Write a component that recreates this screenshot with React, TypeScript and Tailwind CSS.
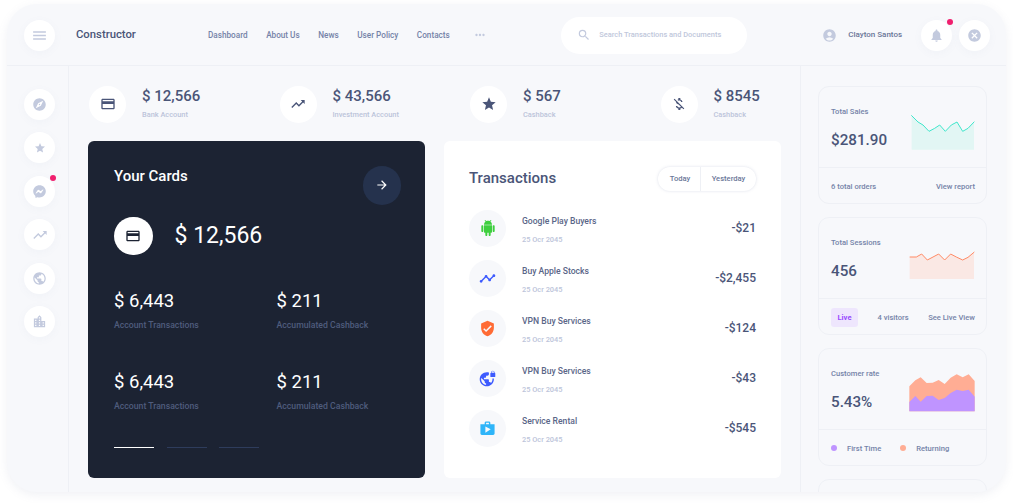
import React from "react";
import { FaFacebookMessenger } from "react-icons/fa";
import {
  MdAccountCircle, MdArrowForward, MdCancel, MdCreditCard, MdExplore, MdLocationCity, MdMenu,
  MdMoneyOff, MdMoreHoriz, MdNotifications, MdPublic, MdSearch, MdShop, MdStar, MdTimeline, MdTrendingUp,
  MdVerifiedUser, MdVpnLock,
} from "react-icons/md";

const stats = [
  { icon: <MdCreditCard size={16} />, value: "$ 12,566", label: "Bank Account" },
  { icon: <MdTrendingUp size={16} />, value: "$ 43,566", label: "Investment Account" },
  { icon: <MdStar size={16} />, value: "$ 567", label: "Cashback" },
  { icon: <MdMoneyOff size={16} />, value: "$ 8545", label: "Cashback" },
];

function Android() {
  return (
    <svg width="16" height="16" viewBox="0 0 24 24" fill="#3ecf3e">
      <path d="M6 18c0 .55.45 1 1 1h1v3.5c0 .83.67 1.5 1.5 1.5s1.5-.67 1.5-1.5V19h2v3.5c0 .83.67 1.5 1.5 1.5s1.5-.67 1.5-1.5V19h1c.55 0 1-.45 1-1V8H6v10zM3.5 8C2.67 8 2 8.67 2 9.5v7c0 .83.67 1.5 1.5 1.5S5 17.33 5 16.5v-7C5 8.67 4.33 8 3.5 8zm17 0c-.83 0-1.5.67-1.5 1.5v7c0 .83.67 1.5 1.5 1.5s1.5-.67 1.5-1.5v-7c0-.83-.67-1.5-1.5-1.5zm-4.97-5.84l1.3-1.3c.2-.2.2-.51 0-.71-.2-.2-.51-.2-.71 0l-1.48 1.48C13.85 1.23 12.95 1 12 1c-.96 0-1.86.23-2.66.63L7.85.15c-.2-.2-.51-.2-.71 0-.2.2-.2.51 0 .71l1.31 1.31C6.97 3.26 6 5.01 6 7h12c0-1.99-.97-3.75-2.47-4.84z" />
    </svg>
  );
}

const tx = [
  { icon: <Android />, name: "Google Play Buyers", amount: "-$21" },
  { icon: <MdTimeline size={17} className="text-[#3d5afe]" />, name: "Buy Apple Stocks", amount: "-$2,455" },
  { icon: <MdVerifiedUser size={17} className="text-[#ff6b35]" />, name: "VPN Buy Services", amount: "-$124" },
  { icon: <MdVpnLock size={17} className="text-[#3d5afe]" />, name: "VPN Buy Services", amount: "-$43" },
  { icon: <MdShop size={17} className="text-[#2fb5f9]" />, name: "Service Rental", amount: "-$545" },
];

function Circle({ children }: { children: React.ReactNode }) {
  return (
    <div className="relative flex h-[31px] w-[31px] shrink-0 items-center justify-center rounded-full bg-white text-[#c3cade] shadow-[0_2px_8px_rgba(120,130,170,0.05)]">
      {children}
    </div>
  );
}

function Dot() {
  return <span className="absolute right-[-1px] top-[-1px] h-[6px] w-[6px] rounded-full bg-[#f01f6e]" />;
}

function CardStat({ value, label }: { value: string; label: string }) {
  return (
    <div>
      <div className="text-[18.5px] leading-[24px] text-white">{value}</div>
      <div className="mt-[6px] text-[8.7px] font-medium leading-[12px] text-[#4f5c7d]">{label}</div>
    </div>
  );
}

function Panel({ title, value, chart, footer }: { title: string; value: string; chart: React.ReactNode; footer: React.ReactNode }) {
  return (
    <div className="h-[118px] w-[169px] shrink-0 rounded-[11px] border border-[#eef0f5] bg-[#f7f8fb]">
      <div className="flex h-[81px] justify-between border-b border-[#eef0f5] px-[12px] pr-[11px]">
        <div className="pt-[19px]">
          <div className="text-[7.6px] font-medium leading-[12px] text-[#7583a8]">{title}</div>
          <div className="mt-[12px] text-[15.2px] font-medium leading-[20px] text-[#4a5578]">{value}</div>
        </div>
        <div className="pt-[27px]">{chart}</div>
      </div>
      <div className="flex h-[35px] items-center justify-between pl-[12px] pr-[11px] pt-[2px] text-[7.6px] font-medium text-[#7583a8]">{footer}</div>
    </div>
  );
}

export default function App() {
  return (
    <div className="h-[504px] w-[1013px] overflow-hidden bg-white pl-[7px] pr-[7px] pt-[4px] font-['Roboto',sans-serif]">
      <div className="flex h-[488px] w-[999px] flex-col overflow-hidden rounded-[30px] bg-[#f7f8fb] shadow-[0_3px_10px_rgba(130,140,170,0.12)]">
        <header className="flex h-[62px] shrink-0 items-center border-b border-[#eef0f5] pl-[17px] pt-[1px]">
          <Circle><MdMenu size={17} /></Circle>
          <div className="ml-[21px] w-[132px] text-[11.3px] font-medium text-[#4a5578]">Constructor</div>
          <nav className="flex items-center gap-[18.5px] text-[8.2px] font-medium text-[#7583a8]">
            <span>Dashboard</span>
            <span>About Us</span>
            <span>News</span>
            <span>User Policy</span>
            <span>Contacts</span>
            <MdMoreHoriz size={14} className="ml-[5px] text-[#c3cade]" />
          </nav>
          <div className="ml-[74px] flex h-[37px] w-[186px] items-center rounded-full bg-white pl-[16px]">
            <MdSearch size={14} className="text-[#c3cade]" />
            <span className="ml-[8px] text-[7.45px] font-medium text-[#c0c7db]">Search Transactions and Documents</span>
          </div>
          <MdAccountCircle size={15} className="ml-[74.5px] text-[#c3cade]" />
          <span className="ml-[11.5px] w-[73px] text-[8px] font-medium text-[#6a7698]">Clayton Santos</span>
          <Circle><MdNotifications size={15} /><Dot /></Circle>
          <div className="ml-[7px]"><Circle><MdCancel size={15} /></Circle></div>
        </header>

        <div className="flex min-h-0 flex-1">
          <aside className="flex w-[62px] shrink-0 flex-col gap-[12.6px] border-r border-[#eef0f5] pl-[17px] pt-[22.5px]">
            <Circle><MdExplore size={15} /></Circle>
            <Circle><MdStar size={12} /></Circle>
            <Circle><FaFacebookMessenger size={13} /><Dot /></Circle>
            <Circle><MdTrendingUp size={16} /></Circle>
            <Circle><MdPublic size={15} /></Circle>
            <Circle><MdLocationCity size={15} /></Circle>
          </aside>

          <main className="w-[731px] shrink-0 pl-[19px] pt-[19.5px]">
            <div className="flex pl-[1px]">
              {stats.map((s) => (
                <div key={s.value} className="flex w-[190.5px] shrink-0">
                  <div className="flex h-[37px] w-[37px] items-center justify-center rounded-full bg-white text-[#4a5578]">{s.icon}</div>
                  <div className="ml-[16px]">
                    <div className="text-[15px] font-medium leading-[20px] text-[#4a5578]">{s.value}</div>
                    <div className="mt-[3px] text-[7.4px] font-medium leading-[12px] text-[#bcc4da]">{s.label}</div>
                  </div>
                </div>
              ))}
            </div>

            <div className="mt-[18.5px] flex gap-[19px]">
              <section className="h-[337px] w-[337px] rounded-[6px] bg-[#1c2333] pl-[26px] pr-[25px] pt-[25.5px]">
                <div className="flex items-start justify-between">
                  <div className="text-[15px] font-medium leading-[18px] text-white">Your Cards</div>
                  <div className="mr-[-1px] mt-[-0.5px] flex h-[38.5px] w-[38.5px] items-center justify-center rounded-full bg-[#25324d] text-white"><MdArrowForward size={14} /></div>
                </div>
                <div className="mt-[12px] flex items-center">
                  <div className="flex h-[38.5px] w-[38.5px] items-center justify-center rounded-full bg-white text-[#1c2333]"><MdCreditCard size={16} /></div>
                  <div className="ml-[22px] text-[23px] leading-[30px] text-white">$ 12,566</div>
                </div>
                <div className="mt-[34px] grid grid-cols-[162.5px_1fr] gap-y-[39px]">
                  <CardStat value="$ 6,443" label="Account Transactions" />
                  <CardStat value="$ 211" label="Accumulated Cashback" />
                  <CardStat value="$ 6,443" label="Account Transactions" />
                  <CardStat value="$ 211" label="Accumulated Cashback" />
                </div>
                <div className="mt-[35px] flex gap-[12.5px]">
                  <div className="h-px w-[40px] bg-white" />
                  <div className="h-px w-[40px] bg-[#2e3c5c]" />
                  <div className="h-px w-[40px] bg-[#2e3c5c]" />
                </div>
              </section>

              <section className="h-[337px] w-[337px] rounded-[6px] bg-white pl-[25px] pr-[25px] pt-[25.5px]">
                <div className="flex items-center justify-between">
                  <div className="text-[15px] font-medium text-[#4a5578]">Transactions</div>
                  <div className="flex h-[24px] w-[98px] items-center rounded-full bg-white text-[7.6px] font-medium text-[#6a7698] shadow-[0_0_3px_rgba(120,130,170,0.25)]">
                    <span className="flex h-full w-[43px] items-center justify-center border-r border-[#eef0f5] pl-[2px]">Today</span>
                    <span className="flex-1 text-center">Yesterday</span>
                  </div>
                </div>
                <div className="mt-[19px] flex flex-col gap-[13px]">
                  {tx.map((t, i) => (
                    <div key={i} className="flex h-[37px] items-center">
                      <div className="flex h-[37px] w-[37px] items-center justify-center rounded-full bg-[#f7f8fb]">{t.icon}</div>
                      <div className="ml-[16px] flex-1 pt-[4px]">
                        <div className="text-[8.6px] font-medium leading-[12px] text-[#5a6688]">{t.name}</div>
                        <div className="mt-[7px] text-[7.4px] font-medium leading-[12px] text-[#bcc4da]">25 Ocr 2045</div>
                      </div>
                      <div className="text-[12px] font-medium text-[#4a5578]">{t.amount}</div>
                    </div>
                  ))}
                </div>
              </section>
            </div>
          </main>

          <aside className="flex flex-1 flex-col gap-[13px] border-l border-[#eef0f5] pl-[17px] pt-[20px]">
            <Panel
              title="Total Sales"
              value="$281.90"
              chart={
                <svg width="64" height="36" viewBox="334 132 192 108" className="mt-[1px]">
                  <polygon fill="#e2f6f4" points="336,133 355,153 370,162 388,181 405,172 420,162 437,181 455,162 472,153 489,181 505,172 523,152 523,236 336,236" />
                  <polyline fill="none" stroke="#3fe6cb" strokeWidth="3" points="335,133 355,153 370,162 388,181 405,172 420,162 437,181 455,162 472,153 489,181 505,172 524,152" />
                </svg>
              }
              footer={<><span>6 total orders</span><span>View report</span></>}
            />
            <Panel
              title="Total Sessions"
              value="456"
              chart={
                <svg width="66" height="28" viewBox="328 546 198 84" className="mt-[6px]">
                  <polygon fill="#fae8e4" points="330,564 350,564 366,555 383,573 400,564 417,555 435,573 453,555 470,564 489,573 505,565 523,549 523,630 330,630" />
                  <polyline fill="none" stroke="#ff8a65" strokeWidth="3" points="330,564 350,564 366,555 383,573 400,564 417,555 435,573 453,555 470,564 489,573 505,565 524,549" />
                </svg>
              }
              footer={
                <>
                  <span className="flex h-[19px] w-[27px] items-center justify-center rounded-[3px] bg-[#eee6fd] font-bold text-[#9a4dff]">Live</span>
                  <span>4 visitors</span>
                  <span>See Live View</span>
                </>
              }
            />
            <Panel
              title="Customer rate"
              value="5.43%"
              chart={
                <svg width="66" height="38" viewBox="326 220 198 114" className="ml-[-2px] mt-[-2px]">
                  <polygon fill="#ffad94" points="327,257 345,239 361,230 379,247 397,246 415,238 433,250 451,231 469,221 487,230 505,221 523,241 523,332 327,332" />
                  <polygon fill="#bf94ff" points="327,304 345,286 361,303 379,286 397,285 415,298 433,292 451,277 469,267 487,271 505,267 523,288 523,332 327,332" />
                </svg>
              }
              footer={
                <div className="flex items-center">
                  <span className="h-[6px] w-[6px] rounded-full bg-[#bf94ff]" />
                  <span className="ml-[10px]">First Time</span>
                  <span className="ml-[19px] h-[6px] w-[6px] rounded-full bg-[#ffad94]" />
                  <span className="ml-[10px]">Returning</span>
                </div>
              }
            />
            <Panel title="" value="" chart={null} footer={null} />
          </aside>
        </div>
      </div>
    </div>
  );
}
